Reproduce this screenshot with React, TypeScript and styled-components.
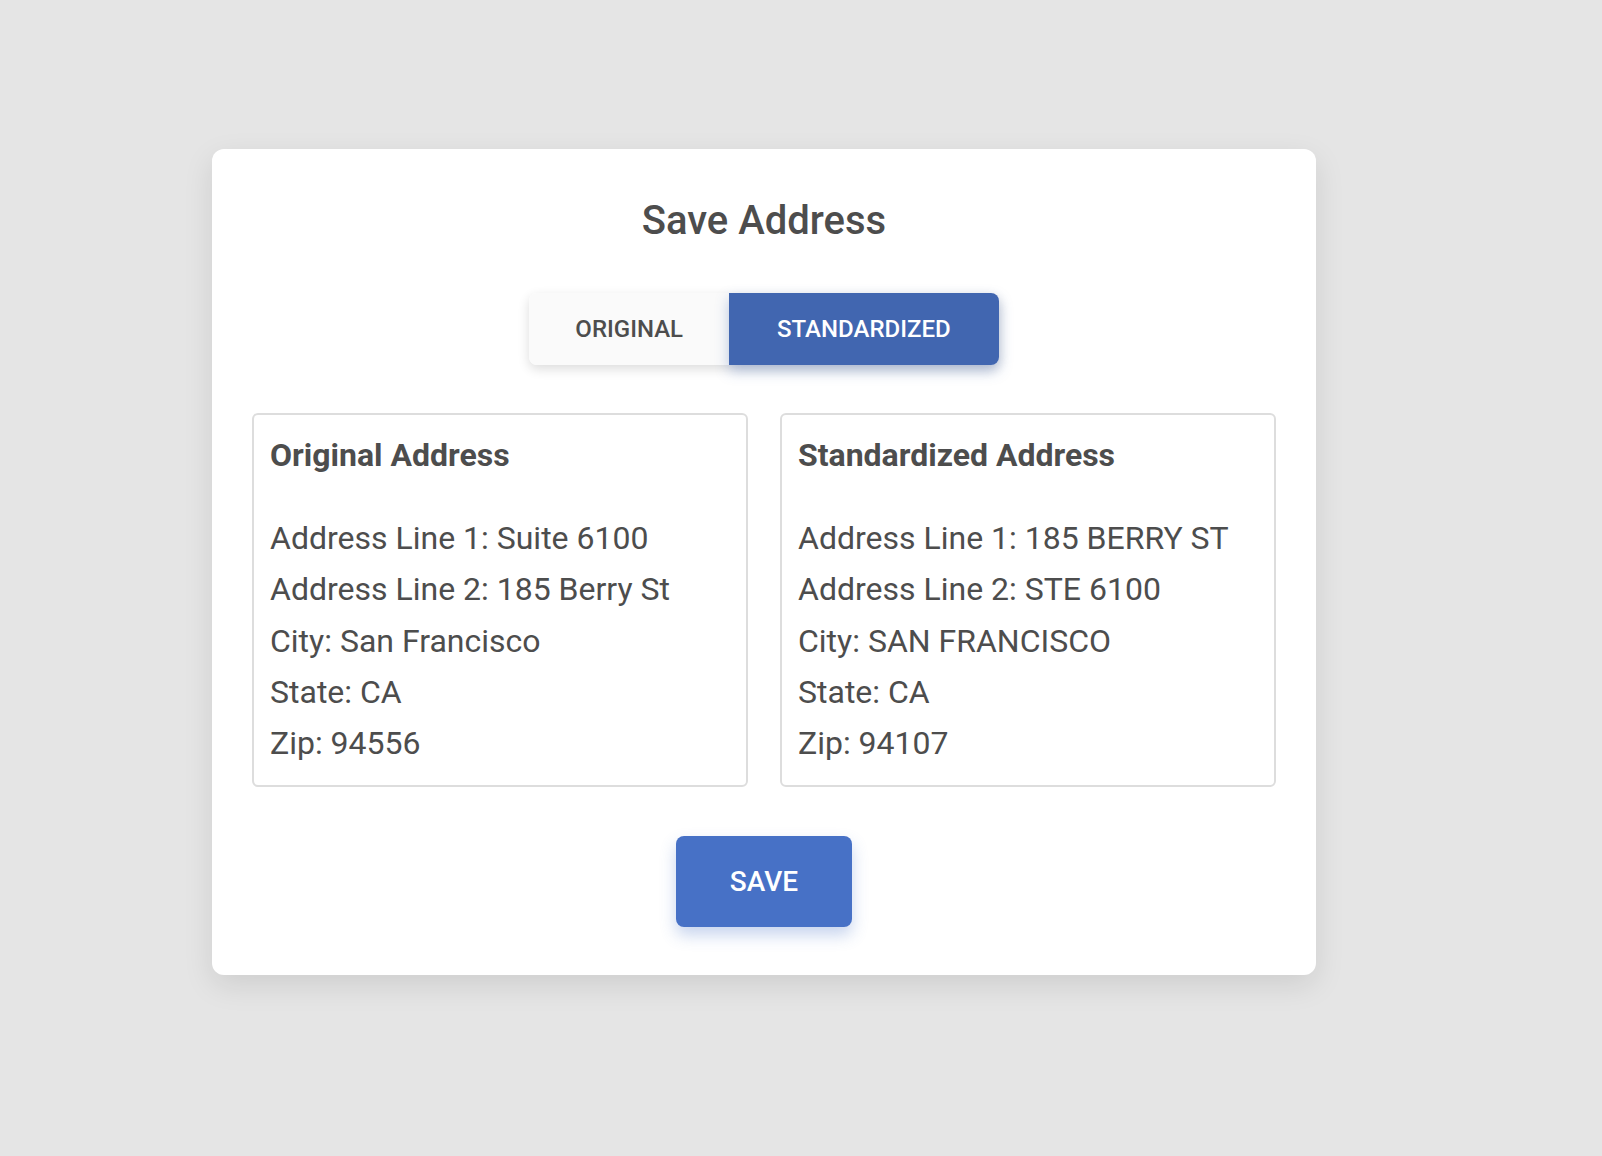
import React from "react";
import styled, { createGlobalStyle } from "styled-components";

const GlobalStyle = createGlobalStyle`
  html, body {
    margin: 0;
    padding: 0;
    background: #e5e5e5;
    font-family: Roboto, "Liberation Sans", Arial, sans-serif;
    color: #4d4d4d;
  }
  * { box-sizing: border-box; }
`;

const Page = styled.div`
  min-height: 1156px;
  padding: 149px 0 0 212px;
`;

const Card = styled.div`
  width: 1104px;
  background: #ffffff;
  border-radius: 12px;
  box-shadow: 0 10px 30px rgba(0, 0, 0, 0.1);
  padding: 40px 40px 48px;
  display: flex;
  flex-direction: column;
  align-items: center;
`;

const Title = styled.h1`
  margin: 0;
  font-size: 40px;
  line-height: 64px;
  font-weight: 500;
  color: #4d4d4d;
`;

const Toggle = styled.div`
  margin-top: 40px;
  display: flex;
  border-radius: 8px;
  box-shadow: 0 4px 12px rgba(0, 0, 0, 0.14);
`;

const ToggleButton = styled.button<{ $active?: boolean }>`
  height: 72px;
  border: none;
  padding: 0 ${(p) => (p.$active ? "48px" : "46px")};
  font-family: inherit;
  font-size: 24px;
  font-weight: 500;
  cursor: pointer;
  background: ${(p) => (p.$active ? "#4166b0" : "#fafafa")};
  color: ${(p) => (p.$active ? "#ffffff" : "#4d4d4d")};
  box-shadow: ${(p) =>
    p.$active ? "0 6px 14px rgba(65, 102, 176, 0.35)" : "none"};
  &:first-child {
    border-radius: 8px 0 0 8px;
  }
  &:last-child {
    border-radius: 0 8px 8px 0;
  }
`;

const Columns = styled.div`
  margin-top: 48px;
  width: 100%;
  display: grid;
  grid-template-columns: 1fr 1fr;
  gap: 32px;
`;

const AddressBox = styled.div`
  border: 2px solid #dddddd;
  border-radius: 6px;
  padding: 15px 16px 16px;
`;

const BoxHeading = styled.h3`
  margin: 0 0 32px;
  font-size: 32px;
  line-height: 51.2px;
  font-weight: 700;
  color: #4d4d4d;
`;

const Line = styled.div`
  font-size: 32px;
  line-height: 51.2px;
  font-weight: 400;
  color: #4d4d4d;
  white-space: nowrap;
`;

const SaveButton = styled.button`
  margin-top: 49px;
  width: 176px;
  height: 91px;
  border: none;
  border-radius: 8px;
  background: #4771c6;
  color: #ffffff;
  font-family: inherit;
  font-size: 28px;
  font-weight: 500;
  cursor: pointer;
  box-shadow: 0 8px 16px rgba(71, 113, 198, 0.3);
`;

type Address = {
  line1: string;
  line2: string;
  city: string;
  state: string;
  zip: string;
};

const original: Address = {
  line1: "Suite 6100",
  line2: "185 Berry St",
  city: "San Francisco",
  state: "CA",
  zip: "94556",
};

const standardized: Address = {
  line1: "185 BERRY ST",
  line2: "STE 6100",
  city: "SAN FRANCISCO",
  state: "CA",
  zip: "94107",
};

const AddressCard = ({ title, a }: { title: string; a: Address }) => (
  <AddressBox>
    <BoxHeading>{title}</BoxHeading>
    <Line>Address Line 1: {a.line1}</Line>
    <Line>Address Line 2: {a.line2}</Line>
    <Line>City: {a.city}</Line>
    <Line>State: {a.state}</Line>
    <Line>Zip: {a.zip}</Line>
  </AddressBox>
);

export default function App() {
  return (
    <>
      <GlobalStyle />
      <Page>
        <Card>
          <Title>Save Address</Title>
          <Toggle>
            <ToggleButton>ORIGINAL</ToggleButton>
            <ToggleButton $active>STANDARDIZED</ToggleButton>
          </Toggle>
          <Columns>
            <AddressCard title="Original Address" a={original} />
            <AddressCard title="Standardized Address" a={standardized} />
          </Columns>
          <SaveButton>SAVE</SaveButton>
        </Card>
      </Page>
    </>
  );
}
